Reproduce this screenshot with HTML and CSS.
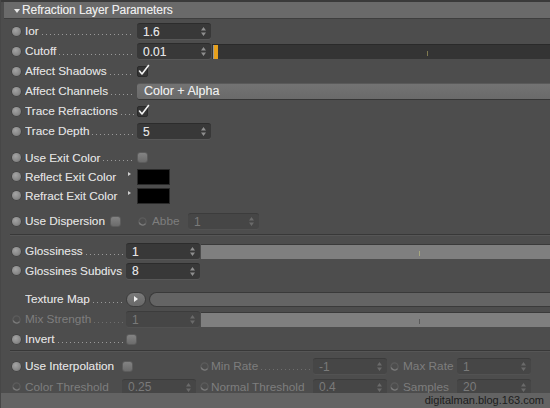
FILE: index.html
```html
<!DOCTYPE html>
<html>
<head>
<meta charset="utf-8">
<link rel="stylesheet" href="styles.css">
</head>
<body>
<div class="panel">
  <div class="topstrip"></div>
  <div class="header"><span class="hdtri"></span><span>Refraction Layer Parameters</span></div>

  <div class="group g1">
    <div class="row">
      <span class="ind"></span>
      <div class="lab w112"><span class="txt">Ior</span><span class="lead"></span></div>
      <div class="field w74"><span class="val">1.6</span><svg class="spin" viewBox="0 0 5 9"><path d="M0 3.5L2.5 0L5 3.5Z M0 5.5L2.5 9L5 5.5Z"/></svg></div>
    </div>
    <div class="row">
      <span class="ind"></span>
      <div class="lab w112"><span class="txt">Cutoff</span><span class="lead"></span></div>
      <div class="field w74"><span class="val">0.01</span><svg class="spin" viewBox="0 0 5 9"><path d="M0 3.5L2.5 0L5 3.5Z M0 5.5L2.5 9L5 5.5Z"/></svg></div>
      <div class="slider dark"><span class="knob"></span><span class="tick t427"></span></div>
    </div>
    <div class="row">
      <span class="ind"></span>
      <div class="lab w112"><span class="txt">Affect Shadows</span><span class="lead"></span></div>
      <span class="check on"><svg viewBox="0 0 13 13"><path d="M2.5 7L5 10L11.5 1.5" fill="none" stroke="#f2f2f2" stroke-width="1.6" stroke-linecap="round" stroke-linejoin="round"/></svg></span>
    </div>
    <div class="row">
      <span class="ind"></span>
      <div class="lab w112"><span class="txt">Affect Channels</span><span class="lead"></span></div>
      <div class="dropdown">Color + Alpha</div>
    </div>
    <div class="row">
      <span class="ind"></span>
      <div class="lab w112"><span class="txt">Trace Refractions</span><span class="lead"></span></div>
      <span class="check on"><svg viewBox="0 0 13 13"><path d="M2.5 7L5 10L11.5 1.5" fill="none" stroke="#f2f2f2" stroke-width="1.6" stroke-linecap="round" stroke-linejoin="round"/></svg></span>
    </div>
    <div class="row">
      <span class="ind"></span>
      <div class="lab w112"><span class="txt">Trace Depth</span><span class="lead"></span></div>
      <div class="field w74"><span class="val">5</span><svg class="spin" viewBox="0 0 5 9"><path d="M0 3.5L2.5 0L5 3.5Z M0 5.5L2.5 9L5 5.5Z"/></svg></div>
    </div>
  </div>

  <div class="group g2">
    <div class="row r19">
      <span class="ind"></span>
      <div class="lab w112"><span class="txt">Use Exit Color</span><span class="lead"></span></div>
      <span class="check"></span>
    </div>
    <div class="row r19">
      <span class="ind"></span>
      <div class="lab w112"><span class="txt">Reflect Exit Color</span><span class="gap"></span><span class="tri"></span></div>
      <span class="swatch"></span>
    </div>
    <div class="row r19">
      <span class="ind"></span>
      <div class="lab w112"><span class="txt">Refract Exit Color</span><span class="gap"></span><span class="tri"></span></div>
      <span class="swatch"></span>
    </div>
  </div>

  <div class="group g3">
    <div class="row">
      <span class="ind"></span>
      <div class="lab w85"><span class="txt">Use Dispersion</span></div>
      <span class="check"></span>
      <svg class="ind off abbe" viewBox="0 0 9 9"><circle cx="4.5" cy="4.5" r="3.6" fill="none" stroke="#5c5c5c" stroke-width="1.3"/><path d="M1.2 5.5A3.6 3.6 0 0 0 7.5 6.6" fill="none" stroke="#7a7a7a" stroke-width="1.3"/></svg>
      <div class="lab w36 dis"><span class="txt">Abbe</span></div>
      <div class="field w71 disf"><span class="val">1</span><svg class="spin" viewBox="0 0 5 9"><path d="M0 3.5L2.5 0L5 3.5Z M0 5.5L2.5 9L5 5.5Z"/></svg></div>
    </div>
  </div>

  <div class="sep s1"></div>

  <div class="group g4">
    <div class="row">
      <span class="ind"></span>
      <div class="lab w101"><span class="txt">Glossiness</span><span class="lead"></span></div>
      <div class="field w74"><span class="val">1</span><svg class="spin" viewBox="0 0 5 9"><path d="M0 3.5L2.5 0L5 3.5Z M0 5.5L2.5 9L5 5.5Z"/></svg></div>
      <div class="slider light"><span class="tick t419"></span></div>
    </div>
    <div class="row r19">
      <span class="ind"></span>
      <div class="lab w101"><span class="txt">Glossines Subdivs</span></div>
      <div class="field w74"><span class="val">8</span><svg class="spin" viewBox="0 0 5 9"><path d="M0 3.5L2.5 0L5 3.5Z M0 5.5L2.5 9L5 5.5Z"/></svg></div>
    </div>
    <div class="row tex">
      <span class="ind none"></span>
      <div class="lab w101"><span class="txt">Texture Map</span><span class="lead"></span></div>
      <span class="pill"><svg viewBox="0 0 4 6"><path d="M0 0L4 3L0 6Z" fill="#f0f0f0"/></svg></span>
      <div class="texbar"></div>
    </div>
    <div class="row">
      <svg class="ind off" viewBox="0 0 9 9"><circle cx="4.5" cy="4.5" r="3.6" fill="none" stroke="#5c5c5c" stroke-width="1.3"/><path d="M1.2 5.5A3.6 3.6 0 0 0 7.5 6.6" fill="none" stroke="#7a7a7a" stroke-width="1.3"/></svg>
      <div class="lab w101 dis"><span class="txt">Mix Strength</span><span class="lead dl"></span></div>
      <div class="field w74 disf"><span class="val">1</span><svg class="spin" viewBox="0 0 5 9"><path d="M0 3.5L2.5 0L5 3.5Z M0 5.5L2.5 9L5 5.5Z"/></svg></div>
      <div class="slider light"><span class="tick t419 dk"></span></div>
    </div>
    <div class="row">
      <span class="ind"></span>
      <div class="lab w101"><span class="txt">Invert</span><span class="lead"></span></div>
      <span class="check"></span>
    </div>
  </div>

  <div class="sep s2"></div>

  <div class="group g5">
    <div class="row">
      <span class="ind"></span>
      <div class="lab w97"><span class="txt">Use Interpolation</span></div>
      <div class="cell w74"><span class="check"></span></div>
      <svg class="ind off c2" viewBox="0 0 9 9"><circle cx="4.5" cy="4.5" r="3.6" fill="none" stroke="#5c5c5c" stroke-width="1.3"/><path d="M1.2 5.5A3.6 3.6 0 0 0 7.5 6.6" fill="none" stroke="#7a7a7a" stroke-width="1.3"/></svg>
      <div class="lab w102 dis"><span class="txt">Min Rate</span><span class="lead dl"></span></div>
      <div class="field w74 disf"><span class="val">-1</span><svg class="spin" viewBox="0 0 5 9"><path d="M0 3.5L2.5 0L5 3.5Z M0 5.5L2.5 9L5 5.5Z"/></svg></div>
      <svg class="ind off c3" viewBox="0 0 9 9"><circle cx="4.5" cy="4.5" r="3.6" fill="none" stroke="#5c5c5c" stroke-width="1.3"/><path d="M1.2 5.5A3.6 3.6 0 0 0 7.5 6.6" fill="none" stroke="#7a7a7a" stroke-width="1.3"/></svg>
      <div class="lab w54 dis"><span class="txt">Max Rate</span></div>
      <div class="field w74 disf"><span class="val">1</span><svg class="spin" viewBox="0 0 5 9"><path d="M0 3.5L2.5 0L5 3.5Z M0 5.5L2.5 9L5 5.5Z"/></svg></div>
    </div>
    <div class="row r21">
      <svg class="ind off" viewBox="0 0 9 9"><circle cx="4.5" cy="4.5" r="3.6" fill="none" stroke="#5c5c5c" stroke-width="1.3"/><path d="M1.2 5.5A3.6 3.6 0 0 0 7.5 6.6" fill="none" stroke="#7a7a7a" stroke-width="1.3"/></svg>
      <div class="lab w97 dis"><span class="txt">Color Threshold</span></div>
      <div class="field w74 disf"><span class="val">0.25</span><svg class="spin" viewBox="0 0 5 9"><path d="M0 3.5L2.5 0L5 3.5Z M0 5.5L2.5 9L5 5.5Z"/></svg></div>
      <svg class="ind off c2" viewBox="0 0 9 9"><circle cx="4.5" cy="4.5" r="3.6" fill="none" stroke="#5c5c5c" stroke-width="1.3"/><path d="M1.2 5.5A3.6 3.6 0 0 0 7.5 6.6" fill="none" stroke="#7a7a7a" stroke-width="1.3"/></svg>
      <div class="lab w102 dis"><span class="txt">Normal Threshold</span></div>
      <div class="field w74 disf"><span class="val">0.4</span><svg class="spin" viewBox="0 0 5 9"><path d="M0 3.5L2.5 0L5 3.5Z M0 5.5L2.5 9L5 5.5Z"/></svg></div>
      <svg class="ind off c3" viewBox="0 0 9 9"><circle cx="4.5" cy="4.5" r="3.6" fill="none" stroke="#5c5c5c" stroke-width="1.3"/><path d="M1.2 5.5A3.6 3.6 0 0 0 7.5 6.6" fill="none" stroke="#7a7a7a" stroke-width="1.3"/></svg>
      <div class="lab w54 dis"><span class="txt">Samples</span></div>
      <div class="field w74 disf"><span class="val">20</span><svg class="spin" viewBox="0 0 5 9"><path d="M0 3.5L2.5 0L5 3.5Z M0 5.5L2.5 9L5 5.5Z"/></svg></div>
    </div>
  </div>

  <div class="watermark">digitalman.blog.163.com</div>
</div>
</body>
</html>
```

FILE: styles.css
```css
html, body {
  margin: 0;
  padding: 0;
  background: #4d4d4d;
}
.panel {
  position: relative;
  width: 550px;
  height: 408px;
  overflow: hidden;
  background: #4d4d4d;
  font-family: "Liberation Sans", Arial, sans-serif;
  font-size: 11.8px;
  color: #dedede;
  text-shadow: 0 0 0.4px rgba(222, 222, 222, 0.6);
  border-left: 1px solid #474747;
  box-sizing: border-box;
}
.topstrip {
  height: 2px;
  background: #3a3a3a;
}
.header {
  height: 16px;
  margin-left: 3px;
  background: #6a6a6a;
  border-bottom: 1px solid #3e3e3e;
  display: flex;
  align-items: center;
  color: #ececec;
  font-size: 12px;
  letter-spacing: -0.1px;
}
.hdtri {
  width: 0;
  height: 0;
  border-left: 3.5px solid transparent;
  border-right: 3.5px solid transparent;
  border-top: 4px solid #eaeaea;
  margin: 1px 2px 0 10px;
}
.group { display: flex; flex-direction: column; }
.g1 { margin-top: 2px; }
.g2 { margin-top: 7px; }
.g3 { margin-top: 6px; }
.g4 { margin-top: 5px; }
.g5 { margin-top: 4px; }

.row {
  display: flex;
  align-items: center;
  height: 20px;
  padding-left: 11px;
}
.row.r19 { height: 19px; }
.row.r21 { height: 21px; }
.row.tex { height: 20px; margin-top: 9px; }

.ind {
  flex: none;
  width: 9px;
  height: 9px;
  border-radius: 50%;
  background: radial-gradient(circle at 40% 35%, #a4a4a4 0%, #8a8a8a 55%, #6e6e6e 100%);
  box-shadow: 0 0 0 0.6px #3c3c3c;
  margin-right: 4px;
}
.ind.none { visibility: hidden; }
.ind.off {
  background: none;
  box-shadow: none;
  border-radius: 0;
}
.ind.abbe { margin-left: 17px; margin-right: 5px; }
.ind.c2 { margin-left: 4px; margin-right: 2px; }
.ind.c3 { margin-left: 3px; margin-right: 4px; }

.lab {
  flex: none;
  display: flex;
  align-items: center;
  height: 100%;
  white-space: nowrap;
  overflow: hidden;
}
.lab.dis { color: #7e7e7e; text-shadow: none; }
.w112 { width: 112px; }
.w101 { width: 101px; }
.w97 { width: 97px; }
.w102 { width: 102px; }
.w85 { width: 85px; }
.w54 { width: 54px; }
.w36 { width: 36px; }
.w74 { width: 74px; }
.w71 { width: 71px; }

.txt { flex: none; }
.lead {
  flex: 1;
  align-self: flex-end;
  height: 1px;
  margin: 0 3px 6px 3px;
  background-image: linear-gradient(to right, #9a9a9a 1px, transparent 1px);
  background-size: 4px 1px;
  background-repeat: repeat-x;
}
.lead.dl {
  background-image: linear-gradient(to right, #6e6e6e 1px, transparent 1px);
}
.gap { flex: 1; }
.tri {
  flex: none;
  width: 0;
  height: 0;
  border-top: 2.5px solid transparent;
  border-bottom: 2.5px solid transparent;
  border-left: 3px solid #d0d0d0;
  margin: 0 6px 5px 0;
}

.cell { flex: none; display: flex; align-items: center; height: 100%; }

.field {
  flex: none;
  box-sizing: border-box;
  height: 16px;
  background: #383838;
  border-radius: 3px;
  border-top: 1px solid #2c2c2c;
  box-shadow: 0 1px 0 #575757;
  display: flex;
  align-items: center;
  justify-content: space-between;
  padding: 0 5px 0 6px;
  color: #e2e2e2;
  font-size: 12px;
}
.field .spin { width: 5px; height: 9px; fill: #8e8e8e; }
.field.disf { background: #464646; border-top-color: #3c3c3c; color: #7a7a7a; text-shadow: none; box-shadow: 0 1px 0 #525252; }
.field.disf .spin { fill: #6a6a6a; }

.slider {
  flex: 1;
  position: relative;
  height: 15px;
  margin-left: 1px;
  box-sizing: border-box;
}
.slider.dark {
  background: #343434;
  border-top: 1px solid #2a2a2a;
}
.slider.light {
  background: #7f7f7f;
  border-top: 1px solid #3a3a3a;
  height: 15px;
}
.knob {
  position: absolute;
  left: 1px;
  top: 0;
  width: 4px;
  height: 14px;
  background: #e7a01c;
  border-left: 1px solid #9a9a9a;
}
.tick {
  position: absolute;
  top: 6px;
  width: 1px;
  height: 5px;
  background: #9a9a80;
}
.t427 { left: 215px; background: #807a50; }
.t419 { left: 218px; background: #a8a880; }
.tick.dk { background: #5a5a5a; }

.check {
  flex: none;
  box-sizing: border-box;
  width: 11px;
  height: 11px;
  border-radius: 3px;
  background: linear-gradient(#838383, #6c6c6c);
  border: 1px solid #5c5c5c;
  position: relative;
}
.check.on {
  background: #343434;
  border: 1px solid #2a2a2a;
  border-radius: 2px;
}
.check.on svg {
  position: absolute;
  left: -1px;
  top: -3px;
  width: 13px;
  height: 13px;
}

.dropdown {
  flex: 1;
  box-sizing: border-box;
  height: 17px;
  background: linear-gradient(#737373, #6a6a6a);
  border-top: 1px solid #5a5a5a;
  border-bottom: 1px solid #353535;
  border-radius: 3px 0 0 3px;
  color: #ececec;
  font-size: 12.5px;
  padding-left: 7px;
  display: flex;
  align-items: center;
}

.swatch {
  flex: none;
  box-sizing: border-box;
  width: 33px;
  height: 16px;
  background: #000;
  border: 1px solid #2a2a2a;
}

.sep {
  margin-left: 9px;
  height: 1px;
  background: #383838;
  border-bottom: 1px solid #565656;
}
.s1 { margin-top: 3px; }
.s2 { margin-top: 1px; }

.pill {
  flex: none;
  box-sizing: border-box;
  width: 20px;
  height: 15px;
  border-radius: 8px;
  background: linear-gradient(#7a7a7a, #686868);
  border: 1px solid #3c3c3c;
  display: flex;
  align-items: center;
  justify-content: center;
}
.pill svg { width: 4px; height: 6px; }
.texbar {
  flex: 1;
  box-sizing: border-box;
  height: 15px;
  margin-left: 3px;
  border-radius: 8px 0 0 8px;
  background: #646464;
  border: 1px solid #3a3a3a;
  border-right: none;
}

.watermark {
  position: absolute;
  left: 0;
  right: 0;
  top: 393px;
  bottom: 0;
  background: #636363;
  color: #1c1c1c;
  text-shadow: none;
  font-size: 11px;
  text-align: right;
  padding-right: 6px;
  line-height: 15px;
  box-sizing: border-box;
}
```
